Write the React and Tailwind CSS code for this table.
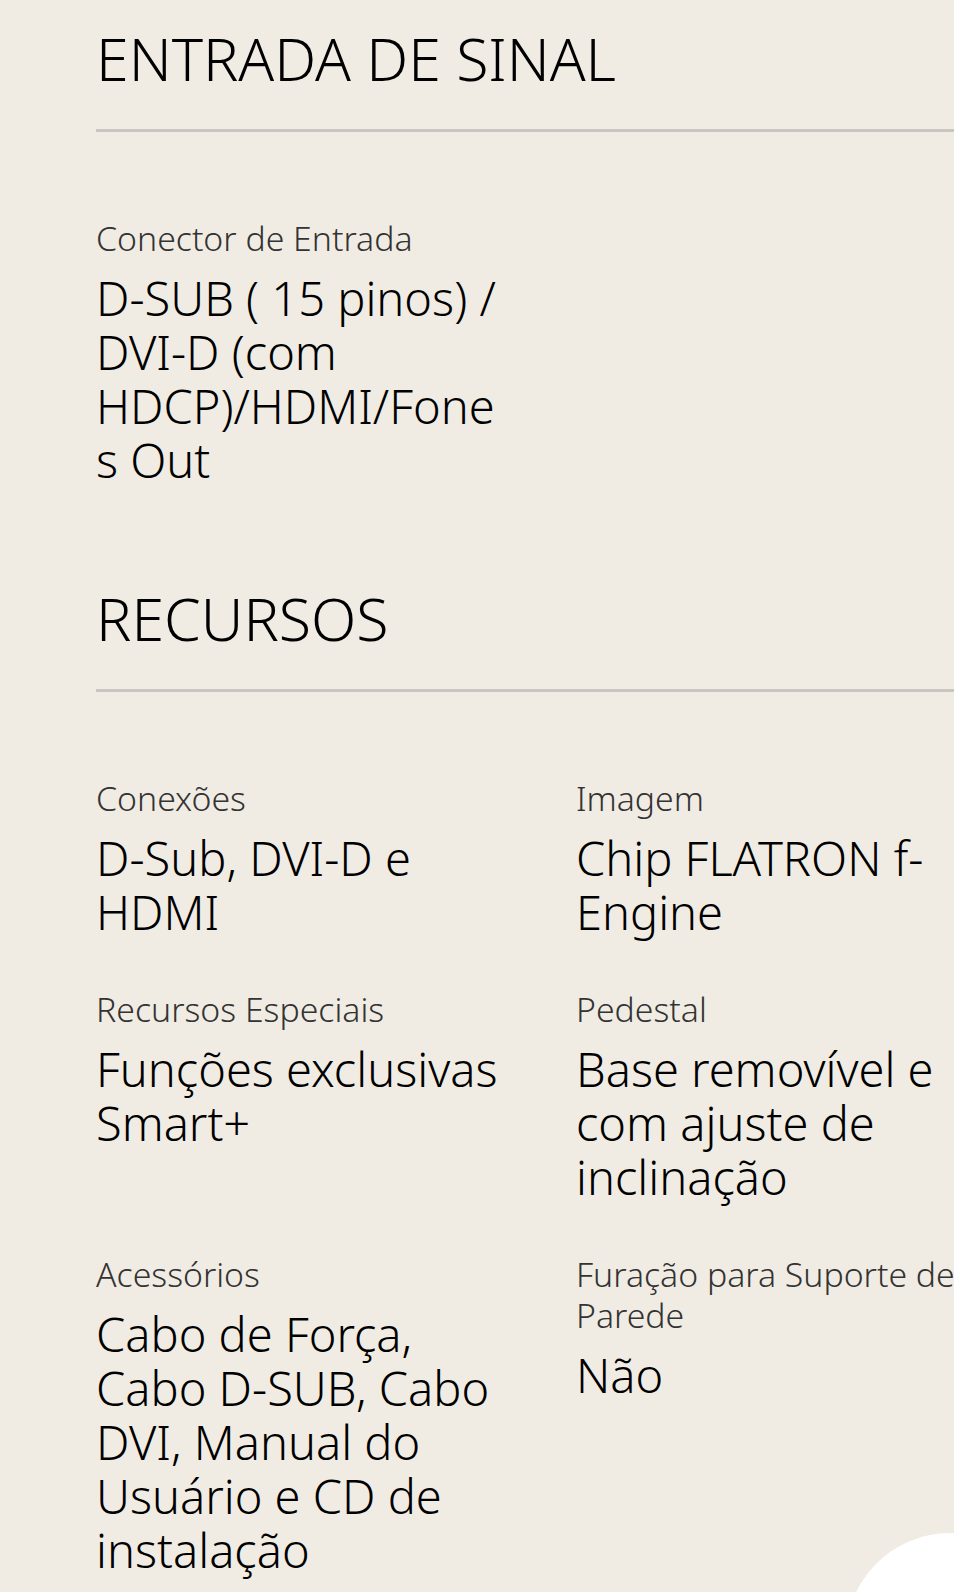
const sections = [
  {
    title: "ENTRADA DE SINAL",
    items: [
      {
        label: "Conector de Entrada",
        value: "D-SUB ( 15 pinos) / DVI-D (com HDCP)/HDMI/Fones Out",
      },
    ],
  },
  {
    title: "RECURSOS",
    items: [
      { label: "Conexões", value: "D-Sub, DVI-D e HDMI" },
      { label: "Imagem", value: "Chip FLATRON f-Engine" },
      { label: "Recursos Especiais", value: "Funções exclusivas Smart+" },
      { label: "Pedestal", value: "Base removível e com ajuste de inclinação" },
      {
        label: "Acessórios",
        value: "Cabo de Força, Cabo D-SUB, Cabo DVI, Manual do Usuário e CD de instalação",
      },
      { label: "Furação para Suporte de Parede", value: "Não" },
    ],
  },
];

const SpecItem = ({ label, value }) => (
  <div className="flex flex-col">
    <p className="text-[33.8px] leading-[41px] font-light text-[#333333]">{label}</p>
    <p className="mt-[12px] text-[47px] leading-[54px] font-light text-black break-words">
      {value}
    </p>
  </div>
);

const App = () => {
  return (
    <div
      className="relative h-[1592px] w-full overflow-hidden bg-[#f0ece4] pl-[96px] pt-[25px]"
      style={{ fontFamily: '"Noto Sans", "Open Sans", sans-serif' }}
    >
      {sections.map((section, i) => (
        <section key={section.title} className={i > 0 ? "mt-[98px]" : ""}>
          <h2 className="text-[59px] leading-[67px] font-light text-black whitespace-nowrap">
            {section.title}
          </h2>
          <div className="mt-[37px] h-[3px] w-full bg-[#c9c6c1]" />
          <div className="mt-[86px] grid grid-cols-[410px_410px] gap-x-[70px] gap-y-[50px]">
            {section.items.map((item) => (
              <SpecItem key={item.label} {...item} />
            ))}
          </div>
        </section>
      ))}
      <div className="absolute left-[846px] top-[1533px] h-[208px] w-[208px] rounded-full bg-white" />
    </div>
  );
};

export default App;
